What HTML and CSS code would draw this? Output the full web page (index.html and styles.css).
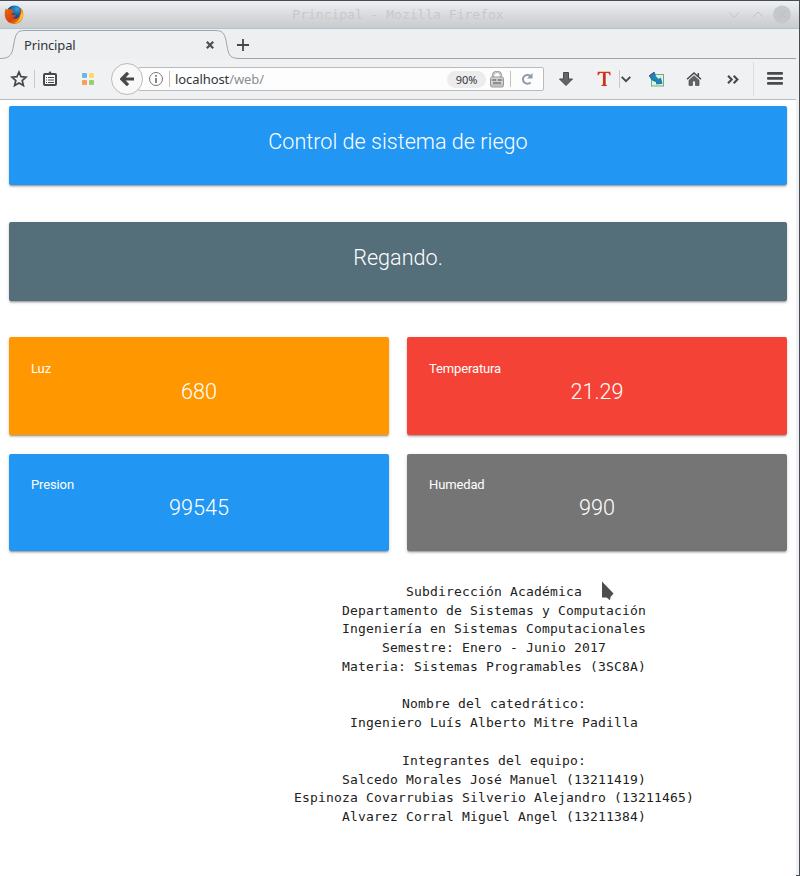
FILE: index.html
```html
<!DOCTYPE html>
<html lang="es">
<head>
<meta charset="utf-8">
<title>Principal</title>
<link rel="stylesheet" href="styles.css">
</head>
<body>
<div class="window">
  <header class="titlebar">
    <svg class="fox" width="20" height="20" viewBox="0 0 20 20">
      <defs>
        <linearGradient id="flame" x1="0" y1="0" x2="1" y2="1"><stop offset="0" stop-color="#e66b13"/><stop offset=".55" stop-color="#d9410d"/><stop offset="1" stop-color="#f6a51b"/></linearGradient>
        <radialGradient id="globe" cx=".65" cy=".2" r=".8"><stop offset="0" stop-color="#31a9e0"/><stop offset=".5" stop-color="#0b57a0"/><stop offset="1" stop-color="#123266"/></radialGradient>
      </defs>
      <circle cx="10.5" cy="9" r="8.4" fill="url(#globe)"/>
      <path d="M1.8 3.2 3.2 5Q5 3.6 7 4.4L8.6 3 8.4 5.5 10.5 6.7 8 8.2Q7.5 10 9.3 10.2L12 9.8Q11.3 13 8.6 12.7 11.5 15.2 14.5 12.2 16.6 9.700 15.500 5.300L17.100 3.600Q19.6 6.4 19.3 10.8 18.3 18.6 10.2 19 2.1 18.6.8 11.1.2 6.6 1.8 3.2Z" fill="url(#flame)"/>
      <path d="M17.1 4Q19.4 7 19 11 17.5 17.6 10.5 18.2 16 15.5 16.4 10.5 17.8 8 17.1 4Z" fill="#fcc530"/>
    </svg>
    <span class="caption">Principal - Mozilla Firefox</span>
    <svg class="controls" width="66" height="20" viewBox="0 0 66 20" fill="none" stroke="#c0c4c7">
      <path d="m3 7.5 5 5 5-5M27 12l5-5 5 5"/>
      <circle cx="56" cy="9.500" r="9" fill="#c4c8cb" stroke="none"/>
      <path d="m52 5.500 8 8m0-8-8 8" stroke="#bbbfc2"/>
    </svg>
  </header>

  <div class="tabs">
    <svg class="tab-shape" width="797" height="30" viewBox="0 0 797 30" fill="none" stroke="#a0a4a7">
      <path d="M0 29.500C8 29.500 11.500 27 13 19.500L14.500 11.500C16 4 18 1.500 25 1.500H215C222 1.500 224.500 4 226 11.500L227.500 19.500C229 27 231 29.500 240 29.500H796" />
    </svg>
    <span class="tab-name">Principal</span>
    <svg class="tab-close" width="8" height="8" viewBox="0 0 8 8"><path d="m.8.8 6.400 6.400m0-6.400L.8 7.200" stroke="#4b4f52" stroke-width="2.200"/></svg>
    <svg class="tab-new" width="12" height="12" viewBox="0 0 12 12"><path d="M6 0v12M0 6h12" stroke="#45494c" stroke-width="1.800"/></svg>
  </div>

  <div class="toolbar">
    <svg class="star" width="18" height="18" viewBox="0 0 18 18"><path d="m9 2 2 4.700 5.100.4-3.900 3.400 1.200 5L9 12.900l-4.400 2.600 1.200-5-3.900-3.400 5.100-.4Z" fill="none" stroke="#484848" stroke-width="1.700"/></svg>
    <i class="sep"></i>
    <svg class="clip" width="14" height="15" viewBox="0 0 14 15"><rect x="1" y="3" width="12" height="11" rx="1" fill="#fafafa" stroke="#484848" stroke-width="2"/><path d="M3.500 4V2h2Q7-1.500 8.500 2h2v2Z" fill="#484848"/><path d="M3 6.500h1m1 0h6M3 9h1m1 0h6M3 11.500h1m1 0h6" stroke="#484848" stroke-width="1.200"/></svg>
    <svg class="squares" width="12" height="12" viewBox="0 0 12 12"><rect width="5" height="5" rx="1" fill="#6db7e8"/><rect x="7" width="5" height="5" rx="1" fill="#fbdc68"/><rect y="7" width="5" height="5" rx="1" fill="#fa9f5b"/><rect x="7" y="7" width="5" height="5" rx="1" fill="#9ccd70"/></svg>
    <span class="back"><svg width="14" height="14" viewBox="0 0 14 14"><path d="M14 7H3M8 .8 1.800 7 8 13.200" fill="none" stroke="#484848" stroke-width="3.200"/></svg></span>
    <div class="address">
      <svg width="14" height="14" viewBox="0 0 14 14"><circle cx="7" cy="7" r="6.500" fill="none" stroke="#777"/><path d="M7 3v1.800M7 6v5" stroke="#666" stroke-width="1.600"/></svg>
      <i class="url-sep"></i>
      <span class="url">localhost<span>/web/</span></span>
      <span class="zoom">90%</span>
      <svg class="lock" width="14" height="17" viewBox="0 0 14 17"><path d="M3 8V5q0-4 4-4t4 4v3" fill="none" stroke="#999" stroke-width="2.200"/><path d="M3 8V5q0-4 4-4t4 4v3" fill="none" stroke="#ddd" stroke-width=".8"/><rect x=".5" y="6" width="13" height="10" rx="1.500" fill="#d2d2d2" stroke="#999"/><path d="M1 9h12M1 14h12" stroke="#aaa"/><path d="M2.500 9h3.500M8 9h3.500M3 12h8" stroke="#777" stroke-width="1.300"/></svg>
      <i class="url-sep"></i>
      <svg class="reload" width="12" height="12" viewBox="0 0 12 12"><path d="M9.300 3.100A4.400 4.400 0 1 0 9.600 9.300" fill="none" stroke="#8e9bab" stroke-width="2"/><path d="M11.500 0v5.500H6Z" fill="#8e9bab"/></svg>
    </div>
    <svg class="down" width="14" height="14" viewBox="0 0 14 14"><path d="M4.500.5h5V7h4L7 13.500.5 7h4Z" fill="#656565" stroke="#484848"/></svg>
    <svg class="tee" width="14" height="16" viewBox="0 0 14 16"><path d="M.8.8h12.400l.5 3.500h-1L11.500 2H8.400v11.500l1.600.7v.8H4.400v-.8l1.500-.7V2H3L1.500 4.300h-1Z" fill="#d53418"/><path d="M7.900 2v12" stroke="#b82a14"/></svg>
    <i class="sep short"></i>
    <svg class="chev" width="10" height="7" viewBox="0 0 10 7"><path d="m.7.8 4.300 4.400L9.300.8" fill="none" stroke="#45494c" stroke-width="1.900"/></svg>
    <svg class="picture" width="16" height="15" viewBox="0 0 16 15"><rect x="2.500" y="2.500" width="12" height="11.500" fill="#d8f6e2" stroke="#73a68a"/><path d="M5.300.2.300 4Q3 9.500 7.600 9.800L7.500 12 13 11.400 11.500 6 9.800 7.400Q5.600 5 5.300.2Z" fill="#1689bd" stroke="#155a80" stroke-width=".7"/><path d="M5.500 0 .2 3.800" stroke="#66318a"/></svg>
    <svg class="home" width="16" height="14" viewBox="0 0 16 14"><path d="M1 7.300 8 1l7 6.300M12.300 1v4" fill="none" stroke="#484848" stroke-width="1.500"/><path d="M3 8.200 8 3.800l5 4.400v5.300H9.500V9h-3v4.500H3Z" fill="#626262" stroke="#505050" stroke-width=".7"/></svg>
    <svg class="more" width="12" height="9" viewBox="0 0 12 9"><path d="m1 .8 3.700 3.700L1 8.200M6.700.8l3.700 3.700-3.700 3.700" fill="none" stroke="#484848" stroke-width="2.100"/></svg>
    <i class="sep tall"></i>
    <svg class="menu" width="16" height="13" viewBox="0 0 16 13"><g fill="#4a4a4a"><rect width="16" height="2.800" rx="1"/><rect y="5" width="16" height="2.800" rx="1"/><rect y="10" width="16" height="2.800" rx="1"/></g></svg>
  </div>

  <main class="page">
    <section class="card banner blue">Control de sistema de riego</section>
    <section class="card banner slate">Regando.</section>
    <div class="readings">
      <section class="card reading orange"><p>Luz</p><h2>680</h2></section>
      <section class="card reading red"><p>Temperatura</p><h2>21.29</h2></section>
      <section class="card reading lower blue"><p>Presion</p><h2>99545</h2></section>
      <section class="card reading lower gray"><p>Humedad</p><h2>990</h2></section>
    </div>
    <pre class="credits">Subdirección Académica
Departamento de Sistemas y Computación
Ingeniería en Sistemas Computacionales
Semestre: Enero - Junio 2017
Materia: Sistemas Programables (3SC8A)

Nombre del catedrático:
Ingeniero Luís Alberto Mitre Padilla

Integrantes del equipo:
Salcedo Morales José Manuel (13211419)
Espinoza Covarrubias Silverio Alejandro (13211465)
Alvarez Corral Miguel Angel (13211384)</pre>
  </main>
  <i class="corner"></i>
</div>
<svg class="cursor" width="18" height="26" viewBox="0 0 18 26"><path d="M4 3.500v16h4.500l3.500 2.700.5-3.200 3-3.500Z" fill="#4d4d4d" stroke="#fff" stroke-width="2.500" stroke-linejoin="round" paint-order="stroke"/></svg>
</body>
</html>
```
FILE: styles.css
```css
* { box-sizing: border-box; }
body { margin: 0; width: 800px; height: 876px; overflow: hidden; background: #fff; }
svg { display: block; flex: none; }
.window { height: 876px; border-top: 1px solid #474c55; border-right: 1px solid #474d52; background: #eff0f1; }

.titlebar { display: flex; align-items: center; height: 28px; padding: 0 7px 0 4px; background: linear-gradient(#eff0f3, #d7dadd 55%, #c9cbcc); border-bottom: 1px solid #a9c5d8; }
.caption { flex: 1; text-align: center; padding-left: 46px; font: 13px/20px "DejaVu Sans Mono", monospace; color: #c5c9cc; white-space: pre; }

.tabs { position: relative; display: flex; align-items: center; height: 30px; background: #eeeff1; font: 13px/18px "Noto Sans", sans-serif; color: #31363b; }
.tab-shape { position: absolute; left: 0; top: 0; }
.tab-name { width: 182px; margin-left: 24px; padding-top: 2px; letter-spacing: -.15px; }
.tab-close { margin: 2px 0 0; }
.tab-new { margin: 2px 0 0 23px; }

.toolbar { display: flex; align-items: center; height: 41px; width: 796px; background: #f0f1f3; border-bottom: 1px solid #b9bcbe; }
.star { margin-left: 10px; }
.sep { width: 1px; height: 18px; background: #c6c8ca; margin-left: 6px; flex: none; }
.clip { margin-left: 8px; margin-top: -1px; }
.squares { margin-left: 25px; }
.back { z-index: 1; display: flex; align-items: center; justify-content: center; flex: none; width: 32px; height: 32px; margin-left: 17px; border: 1px solid #b9bbbd; border-radius: 50%; background: #f8f8f9; }
.address { display: flex; align-items: center; flex: none; width: 406px; height: 24px; margin-left: -5px; padding-left: 10px; border: 1px solid #b9bcbe; border-radius: 2px; background: #fdfdfd; }
.url-sep { width: 1px; height: 16px; margin-left: 6px; background: #bfc1c3; flex: none; }
.url { width: 272px; margin-left: 5px; font: 13px/18px "Noto Sans", sans-serif; letter-spacing: -.08px; color: #31363b; }
.url span { color: #8b8e91; }
.zoom { width: 39px; height: 17px; border-radius: 9px; background: #ececed; text-align: center; font: 11px/18px "Noto Sans", sans-serif; letter-spacing: -.1px; color: #31363b; }
.lock { margin-left: 4px; }
.reload { margin-left: 10px; }
.down { margin-left: 15px; }
.tee { margin-left: 24px; }
.short { margin-left: 8px; }
.chev { margin-left: 1px; }
.picture { margin-left: 18px; }
.home { margin-left: 21px; }
.more { margin-left: 25px; }
.tall { height: 34px; margin-left: 14px; background: #dcddde; }
.menu { margin-left: 13px; margin-top: -1px; }

.page { width: 796px; height: 775px; padding: 6px 9px 0; background: #fff; }
.card { border-radius: 2px; color: #fff; font-family: Roboto, sans-serif; box-shadow: 0 2px 2px 0 rgba(0,0,0,.14), 0 1px 4px 0 rgba(0,0,0,.12), 0 2px 1px -1px rgba(0,0,0,.2); }
.banner { height: 79px; margin-bottom: 37px; padding-top: 22px; text-align: center; font-size: 21.600px; line-height: 28px; font-weight: 300; }
.slate { background: #546e7a; margin-bottom: 36px; }
.blue { background: #2196f3; }
.orange { background: #ff9800; }
.red { background: #f44336; }
.gray { background: #757575; }
.readings { display: grid; grid-template-columns: 380px 380px; grid-template-rows: 98px 97px; gap: 19px 18px; }
.reading { padding: 22px; }
.lower { padding-top: 21px; }
.reading p { margin: 0; font-size: 13px; line-height: 19px; letter-spacing: -.13px; }
.reading h2 { margin: 0; text-align: center; font-size: 21.600px; line-height: 27px; font-weight: 300; }
.credits { width: 400px; margin: 31.850px 0 0 285px; text-align: center; font: 13px/18.770px "DejaVu Sans Mono", monospace; letter-spacing: .174px; color: #212121; }
.corner { display: block; height: 1px; border-left: 796px solid #fff; background: #474d52; }
.cursor { position: absolute; left: 598px; top: 578px; }
```
